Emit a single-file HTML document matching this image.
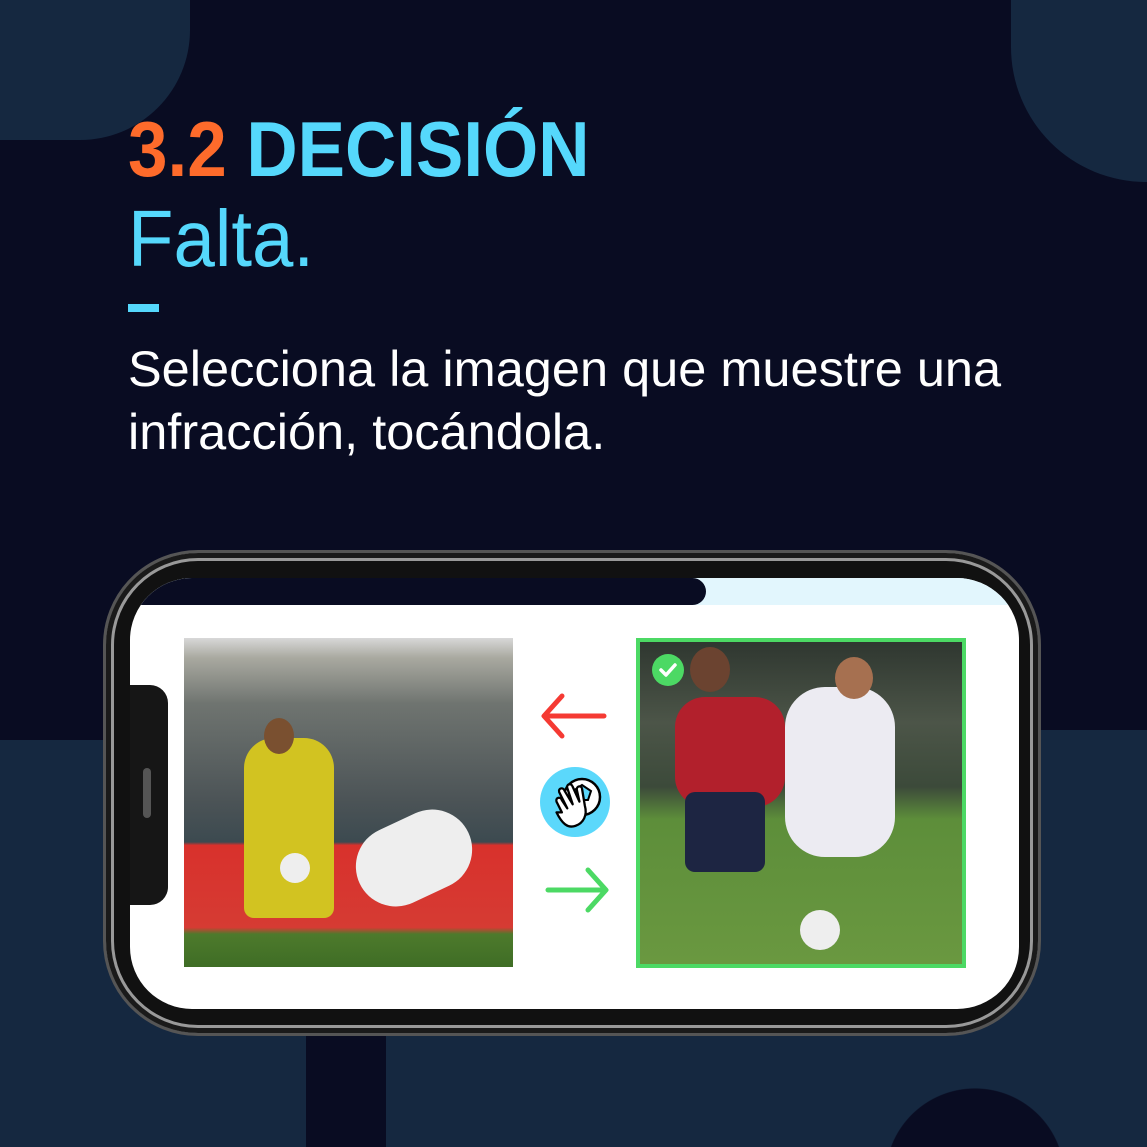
<!DOCTYPE html>
<html style="width:1147px;height:1147px;overflow:hidden"><head><meta charset="utf-8"><style>
*{margin:0;padding:0;box-sizing:border-box}
body{width:1147px;height:1147px;background:#090c22;position:relative;overflow:hidden;font-family:"Liberation Sans",sans-serif}
.a{position:absolute}
.lt{background:#152840}
</style></head><body>
<div class="a lt" style="left:0;top:0;width:190px;height:140px;border-bottom-right-radius:110px"></div>
<div class="a lt" style="left:1011px;top:0;width:136px;height:182px;border-bottom-left-radius:135px"></div>
<div class="a lt" style="left:0;top:740px;width:306px;height:407px;border-top-right-radius:130px 40px"></div>
<div class="a lt" style="left:386px;top:730px;width:761px;height:417px;border-top-left-radius:60px 300px"></div>
<div class="a" style="left:885px;top:1088px;width:180px;height:59px;background:radial-gradient(circle 90px at 90px 90px,#090c22 99%,transparent 100%)"></div>

<div class="a" style="left:128px;top:104px;font-weight:bold;font-size:78px;line-height:90px;white-space:nowrap;transform:scaleX(0.91);transform-origin:left"><span style="color:#fe6b2b">3.2</span> <span style="color:#55d8fc">DECISIÓN</span></div>
<div class="a" style="left:128px;top:194px;font-size:80px;line-height:90px;color:#55d8fc;transform:scaleX(0.93);transform-origin:left">Falta.</div>
<div class="a" style="left:128px;top:304px;width:31px;height:8px;background:#55d8fc"></div>
<div class="a" style="left:128px;top:338px;font-size:50px;line-height:63px;color:#fff;white-space:nowrap;transform:scaleX(1.01);transform-origin:left">Selecciona la imagen que muestre una<br>infracción, tocándola.</div>

<div class="a" style="left:103px;top:550px;width:938px;height:486px;border-radius:95px;background:#111;border:3px solid #555;box-shadow:inset 0 0 0 5px #1a1a1a, inset 0 0 0 8px #999"></div>
<div class="a" style="left:130px;top:578px;width:889px;height:431px;border-radius:62px;background:#fff;overflow:hidden">
  <div class="a" style="left:0;top:0;width:889px;height:27px;background:#e2f6fd"></div>
  <div class="a" style="left:0;top:0;width:576px;height:27px;background:#090c22;border-radius:0 14px 14px 0"></div>
</div>
<div class="a" style="left:130px;top:685px;width:38px;height:220px;background:#161616;border-radius:0 18px 18px 0"></div>
<div class="a" style="left:143px;top:768px;width:8px;height:50px;background:#555;border-radius:4px"></div>

<div class="a" style="left:184px;top:638px;width:329px;height:329px;overflow:hidden;background:linear-gradient(#d8d8d8 0,#a9a9a0 6%,#6f7470 20%,#4b5356 50%,#3c4a50 62%,#d8312c 63%,#d63b33 88%,#4d7a2c 90%,#3f6d25 100%)">
  <div class="a" style="left:60px;top:100px;width:90px;height:180px;background:#d2c321;border-radius:30px 30px 10px 10px"></div>
  <div class="a" style="left:80px;top:80px;width:30px;height:36px;background:#7a5030;border-radius:50%"></div>
  <div class="a" style="left:170px;top:180px;width:120px;height:80px;background:#eee;border-radius:40px;transform:rotate(-25deg)"></div>
  <div class="a" style="left:96px;top:215px;width:30px;height:30px;border-radius:50%;background:#eee"></div>
</div>
<div class="a" style="left:636px;top:638px;width:330px;height:330px;border:4px solid #4cd964;overflow:hidden;background:linear-gradient(#2f3730 0,#4c5548 25%,#3c4a3a 45%,#5d8e3a 55%,#6a9840 100%)">
  <div class="a" style="left:35px;top:55px;width:110px;height:110px;background:#b2202c;border-radius:30px"></div>
  <div class="a" style="left:45px;top:150px;width:80px;height:80px;background:#1d2542;border-radius:10px"></div>
  <div class="a" style="left:145px;top:45px;width:110px;height:170px;background:#ecebf2;border-radius:40px"></div>
  <div class="a" style="left:50px;top:5px;width:40px;height:45px;background:#6b4330;border-radius:50%"></div>
  <div class="a" style="left:195px;top:15px;width:38px;height:42px;background:#a67050;border-radius:50%"></div>
  <div class="a" style="left:160px;top:268px;width:40px;height:40px;border-radius:50%;background:#eee"></div>
  <div class="a" style="left:12px;top:12px;width:32px;height:32px;border-radius:50%;background:#4cd964"></div>
  <svg class="a" style="left:12px;top:12px" width="32" height="32"><path d="M9 16l5 5 9-10" fill="none" stroke="#fff" stroke-width="3.5" stroke-linecap="round" stroke-linejoin="round"/></svg>
</div>

<svg class="a" style="left:540px;top:690px" width="70" height="230">
  <path d="M64 26H6M22 6L4 26 22 46" fill="none" stroke="#f53a33" stroke-width="5" stroke-linecap="round" stroke-linejoin="round"/>
  <circle cx="35" cy="112" r="35" fill="#5bd8fb"/>
  <circle cx="42" cy="107" r="18" fill="#fff" stroke="#000" stroke-width="2.5"/>
  <path d="M33 101l9-6 9 6-3 9h-12z" fill="#5bd8fb" stroke="#000" stroke-width="2"/>
  <path transform="translate(30,117) scale(1.35) translate(-24,-112)" d="M18 116l-4-8c-1-3 3-4 4-1l4 6-6-12c-1-3 3-4 4-1l6 10-4-12c-1-3 3-4 4-1l5 11-2-9c0-3 4-3 4 0l2 12c2 7-1 13-7 15-6 2-10-2-14-10z" fill="#fff" stroke="#000" stroke-width="1.7" stroke-linejoin="round"/>
  <path d="M8 200H64M48 180L66 200 48 220" fill="none" stroke="#4cd964" stroke-width="5" stroke-linecap="round" stroke-linejoin="round"/>
</svg>
</body></html>
